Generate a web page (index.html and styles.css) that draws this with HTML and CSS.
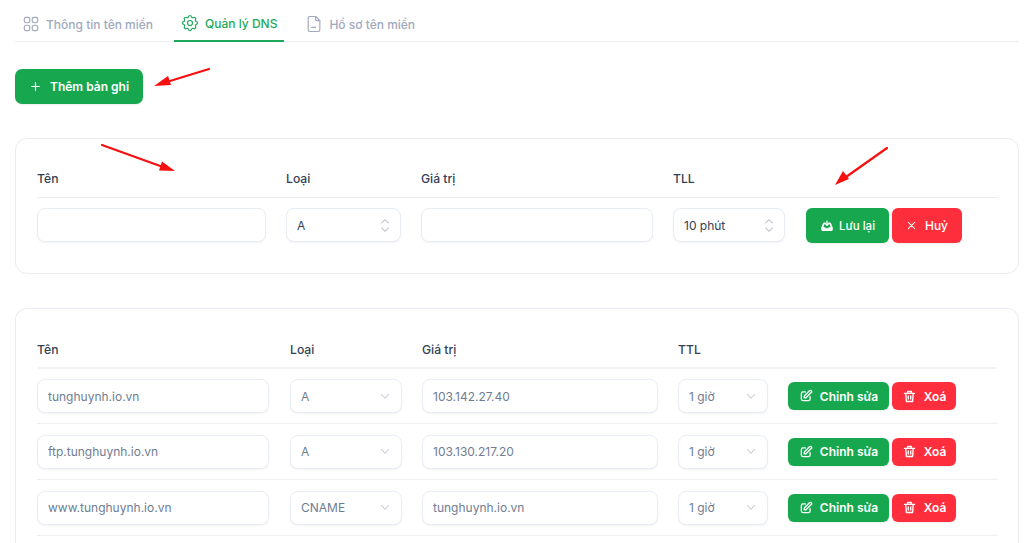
FILE: index.html
```html
<!DOCTYPE html>
<html lang="vi">
<head>
<meta charset="utf-8">
<title>Quản lý DNS</title>
<link rel="stylesheet" href="styles.css">
</head>
<body>
<nav class="tabs">
  <a class="tab">
    <svg class="tab-icon" viewBox="0 0 24 24"><rect x="4" y="4" width="6.5" height="6.5" rx="2"/><rect x="13.5" y="4" width="6.5" height="6.5" rx="2"/><rect x="4" y="13.5" width="6.5" height="6.5" rx="2"/><rect x="13.5" y="13.5" width="6.5" height="6.5" rx="2"/></svg>
    Thông tin tên miền
  </a>
  <a class="tab tab-active">
    <svg class="tab-icon" viewBox="0 0 24 24"><path d="M10.3 4.3c.4-1.8 3-1.8 3.4 0a1.7 1.7 0 0 0 2.6 1.1c1.5-1 3.3.8 2.4 2.4a1.7 1.7 0 0 0 1 2.5c1.8.4 1.8 3 0 3.4a1.7 1.7 0 0 0-1 2.6c.9 1.5-.9 3.3-2.4 2.4a1.7 1.7 0 0 0-2.6 1c-.4 1.8-3 1.8-3.4 0a1.7 1.7 0 0 0-2.6-1c-1.5.9-3.3-.9-2.4-2.4a1.7 1.7 0 0 0-1-2.6c-1.8-.4-1.8-3 0-3.4a1.7 1.7 0 0 0 1-2.5c-.9-1.6.9-3.4 2.4-2.4a1.7 1.7 0 0 0 2.6-1.1z"/><circle cx="12" cy="12" r="3"/></svg>
    Quản lý DNS
  </a>
  <a class="tab">
    <svg class="tab-icon" viewBox="0 0 24 24"><path d="M14 3v4a1 1 0 0 0 1 1h4"/><path d="M17 21H7a2 2 0 0 1-2-2V5a2 2 0 0 1 2-2h7l5 5v11a2 2 0 0 1-2 2z"/><path d="M9 16h5"/></svg>
    Hồ sơ tên miền
  </a>
</nav>

<button class="btn btn-add" type="button">
  <svg class="icon-plus" viewBox="0 0 24 24"><path d="M12 5v14M5 12h14"/></svg>
  Thêm bản ghi
</button>

<section class="card card-new">
  <div class="row row-new row-head">
    <div>Tên</div><div>Loại</div><div>Giá trị</div><div>TLL</div><div></div>
  </div>
  <div class="row row-new row-last">
    <div class="field"></div>
    <div class="field select">A<svg class="updown" viewBox="0 0 12 20"><path d="M2 7l4-4 4 4M2 13l4 4 4-4"/></svg></div>
    <div class="field"></div>
    <div class="field select">10 phút<svg class="updown" viewBox="0 0 12 20"><path d="M2 7l4-4 4 4M2 13l4 4 4-4"/></svg></div>
    <div class="actions actions-new">
      <button class="btn btn-green btn-save" type="button">
        <svg class="icon-btn icon-save" viewBox="0 0 24 24"><path class="fill" d="M2 15 5 7.5A2.5 2.5 0 0 1 7.3 6H9.500v2.500H8L5.600 14H9l1 2h4l1-2h3.400L16 8.500h-1.500V6h2.200A2.500 2.500 0 0 1 19 7.500L22 15v3a2.500 2.500 0 0 1-2.500 2.500h-15A2.500 2.500 0 0 1 2 18z"/><path d="M12 3.500v7M9 8l3 3 3-3"/></svg>
        Lưu lại
      </button>
      <button class="btn btn-red btn-cancel" type="button">
        <svg class="icon-btn icon-x" viewBox="0 0 24 24"><path d="M5 5l14 14M19 5 5 19"/></svg>
        Huỷ
      </button>
    </div>
  </div>
</section>

<section class="card card-list">
  <div class="row row-list row-head row-head-list">
    <div>Tên</div><div>Loại</div><div>Giá trị</div><div>TTL</div><div></div>
  </div>

  <div class="row row-list row-record">
    <div class="field muted name">tunghuynh.io.vn</div>
    <div class="field muted select">A<svg class="chev" viewBox="0 0 12 8"><path d="M1.500 1.500 6 6l4.500-4.500"/></svg></div>
    <div class="field muted">103.142.27.40</div>
    <div class="field muted select">1 giờ<svg class="chev" viewBox="0 0 12 8"><path d="M1.500 1.500 6 6l4.500-4.500"/></svg></div>
    <div class="actions">
      <button class="btn btn-green btn-edit" type="button"><svg class="icon-btn icon-edit" viewBox="0 0 24 24"><path d="M11 5H7a3 3 0 0 0-3 3v9a3 3 0 0 0 3 3h9a3 3 0 0 0 3-3v-4"/><path d="M9 15h3L21 6a2.100 2.100 0 0 0-3-3l-9 9z"/></svg>Chỉnh sửa</button>
      <button class="btn btn-red btn-del" type="button"><svg class="icon-btn icon-trash" viewBox="0 0 24 24"><path d="M4 7h16M9 7V4h6v3M6 7l1 13h10l1-13M10 11v5M14 11v5"/></svg>Xoá</button>
    </div>
  </div>

  <div class="row row-list row-record">
    <div class="field muted name">ftp.tunghuynh.io.vn</div>
    <div class="field muted select">A<svg class="chev" viewBox="0 0 12 8"><path d="M1.500 1.500 6 6l4.500-4.500"/></svg></div>
    <div class="field muted">103.130.217.20</div>
    <div class="field muted select">1 giờ<svg class="chev" viewBox="0 0 12 8"><path d="M1.500 1.500 6 6l4.500-4.500"/></svg></div>
    <div class="actions">
      <button class="btn btn-green btn-edit" type="button"><svg class="icon-btn icon-edit" viewBox="0 0 24 24"><path d="M11 5H7a3 3 0 0 0-3 3v9a3 3 0 0 0 3 3h9a3 3 0 0 0 3-3v-4"/><path d="M9 15h3L21 6a2.100 2.100 0 0 0-3-3l-9 9z"/></svg>Chỉnh sửa</button>
      <button class="btn btn-red btn-del" type="button"><svg class="icon-btn icon-trash" viewBox="0 0 24 24"><path d="M4 7h16M9 7V4h6v3M6 7l1 13h10l1-13M10 11v5M14 11v5"/></svg>Xoá</button>
    </div>
  </div>

  <div class="row row-list row-record">
    <div class="field muted name">www.tunghuynh.io.vn</div>
    <div class="field muted select">CNAME<svg class="chev" viewBox="0 0 12 8"><path d="M1.500 1.500 6 6l4.500-4.500"/></svg></div>
    <div class="field muted">tunghuynh.io.vn</div>
    <div class="field muted select">1 giờ<svg class="chev" viewBox="0 0 12 8"><path d="M1.500 1.500 6 6l4.500-4.500"/></svg></div>
    <div class="actions">
      <button class="btn btn-green btn-edit" type="button"><svg class="icon-btn icon-edit" viewBox="0 0 24 24"><path d="M11 5H7a3 3 0 0 0-3 3v9a3 3 0 0 0 3 3h9a3 3 0 0 0 3-3v-4"/><path d="M9 15h3L21 6a2.100 2.100 0 0 0-3-3l-9 9z"/></svg>Chỉnh sửa</button>
      <button class="btn btn-red btn-del" type="button"><svg class="icon-btn icon-trash" viewBox="0 0 24 24"><path d="M4 7h16M9 7V4h6v3M6 7l1 13h10l1-13M10 11v5M14 11v5"/></svg>Xoá</button>
    </div>
  </div>
</section>

<svg class="arrows" viewBox="0 0 1024 543">
  <path class="shaft" d="M209 69 165 82.500"/><path class="head" d="M154 86l14-10 3 9z"/>
  <path class="shaft" d="M102 145 163 167"/><path class="head" d="M175 171l-16-.5 3-9z"/>
  <path class="shaft" d="M887 148 846 177"/><path class="head" d="M835 185l8-14 6 8z"/>
</svg>
</body>
</html>
```

FILE: styles.css
```css
* { box-sizing: border-box; }

html, body {
  height: 543px;
  overflow: hidden;
}

body {
  margin: 0;
  padding: 0 5px 0 15px;
  position: relative;
  background: #fff;
  font-family: Inter, "Liberation Sans", sans-serif;
  font-size: 12px;
  color: #344054;
}

.tabs {
  display: flex;
  height: 42px;
  padding-top: 6px;
  border-bottom: 1px solid #eceef2;
}

.tab {
  display: flex;
  align-items: center;
  gap: 5px;
  height: 36px;
  margin-bottom: -1px;
  padding: 0 7px 0 6px;
  font-weight: 500;
  font-size: 12px;
  color: #a1a9bd;
}
.tab:first-child { margin-right: 14px; }
.tab:nth-child(2) { margin-right: 14px; }

.tab-active {
  color: #1ea95a;
  border-bottom: 2px solid #1ea95a;
}

.tab-icon {
  width: 20px;
  height: 20px;
  fill: none;
  stroke: currentColor;
  stroke-width: 1.4;
  stroke-linecap: round;
  stroke-linejoin: round;
}

.btn {
  display: inline-flex;
  align-items: center;
  justify-content: center;
  border: 1px solid transparent;
  border-radius: 6px;
  font-family: inherit;
  font-weight: 600;
  font-size: 12px;
  color: #fff;
  padding: 0;
  box-shadow: 0 1px 2px rgba(16, 24, 40, .08);
}

.btn-green, .btn-add { background: #17a84f; }
.btn-red { background: #fe2e3c; }

.btn-add {
  width: 128px;
  height: 35px;
  margin-top: 27px;
  gap: 8px;
  border-radius: 7px;
  display: flex;
}

.icon-plus {
  width: 13px;
  height: 13px;
  fill: none;
  stroke: #fff;
  stroke-width: 2.2;
  stroke-linecap: round;
}

.card {
  background: #fff;
  border: 1px solid #e9ecf2;
  border-radius: 12px;
  padding: 21px 21px 0;
}

.card-new {
  height: 136px;
  margin-top: 34px;
}

.card-list {
  height: 235px;
  margin-top: 34px;
  border-bottom: 0;
  border-radius: 12px 12px 0 0;
}

.row {
  display: grid;
  column-gap: 20px;
  align-items: center;
}

.row-new { grid-template-columns: 229px 115px 232px 112px 1fr; }
.row-list { grid-template-columns: 233px 112px 236px 90px 1fr; }

.row-head {
  height: 38px;
  font-weight: 500;
  font-size: 12.2px;
  color: #344054;
  border-bottom: 1px solid #e9ecf2;
}

.row-head-list {
  height: 39px;
  padding-top: 1px;
  border-bottom: 2px solid #eff1f5;
}

.row-last {
  padding-top: 10px;
  align-items: start;
}

.row-record {
  height: 56px;
  border-bottom: 1px solid #edeff4;
}
.row-record:first-of-type { height: 55px; }
.row-head-list + .row-record { height: 55px; }

.field {
  display: flex;
  align-items: center;
  justify-content: space-between;
  height: 34px;
  padding: 0 10px;
  border: 1px solid #e8ecf4;
  border-radius: 8px;
  background: #fff;
  box-shadow: 0 1px 2px rgba(16, 24, 40, .05);
  font-size: 12px;
  color: #344054;
}

.muted { color: #6f7d92; }
.name { margin-right: 1px; }

.updown {
  width: 10px;
  height: 17px;
  fill: none;
  stroke: #c3c8d2;
  stroke-width: 1.3;
  stroke-linecap: round;
  stroke-linejoin: round;
}

.chev {
  width: 10px;
  height: 7px;
  margin-right: 1px;
  fill: none;
  stroke: #ccd1da;
  stroke-width: 1.3;
  stroke-linecap: round;
  stroke-linejoin: round;
}

.actions {
  display: flex;
  gap: 3px;
}

.actions-new { margin-left: 1px; }

.icon-btn {
  fill: none;
  stroke: #fff;
  stroke-width: 2.200;
  stroke-linecap: round;
  stroke-linejoin: round;
}
.icon-btn .fill { fill: #fff; stroke: none; }
.icon-save { width: 14px; height: 14px; }
.icon-x { width: 11px; height: 11px; }
.icon-edit { width: 14px; height: 14px; }
.icon-trash { width: 15px; height: 15px; }

.btn-save { width: 83px; height: 35px; gap: 5px; font-weight: 500; font-size: 11.500px; }
.btn-cancel { width: 70px; height: 35px; gap: 8px; font-weight: 500; }
.btn-edit { width: 101px; height: 28px; gap: 7px; }
.btn-del { width: 64px; height: 28px; gap: 7px; }

.arrows {
  position: absolute;
  left: 0;
  top: 0;
  width: 1024px;
  height: 543px;
  pointer-events: none;
}
.shaft { stroke: #f80f0f; stroke-width: 2.200; fill: none; stroke-linecap: round; }
.head { fill: #f80f0f; }
```
